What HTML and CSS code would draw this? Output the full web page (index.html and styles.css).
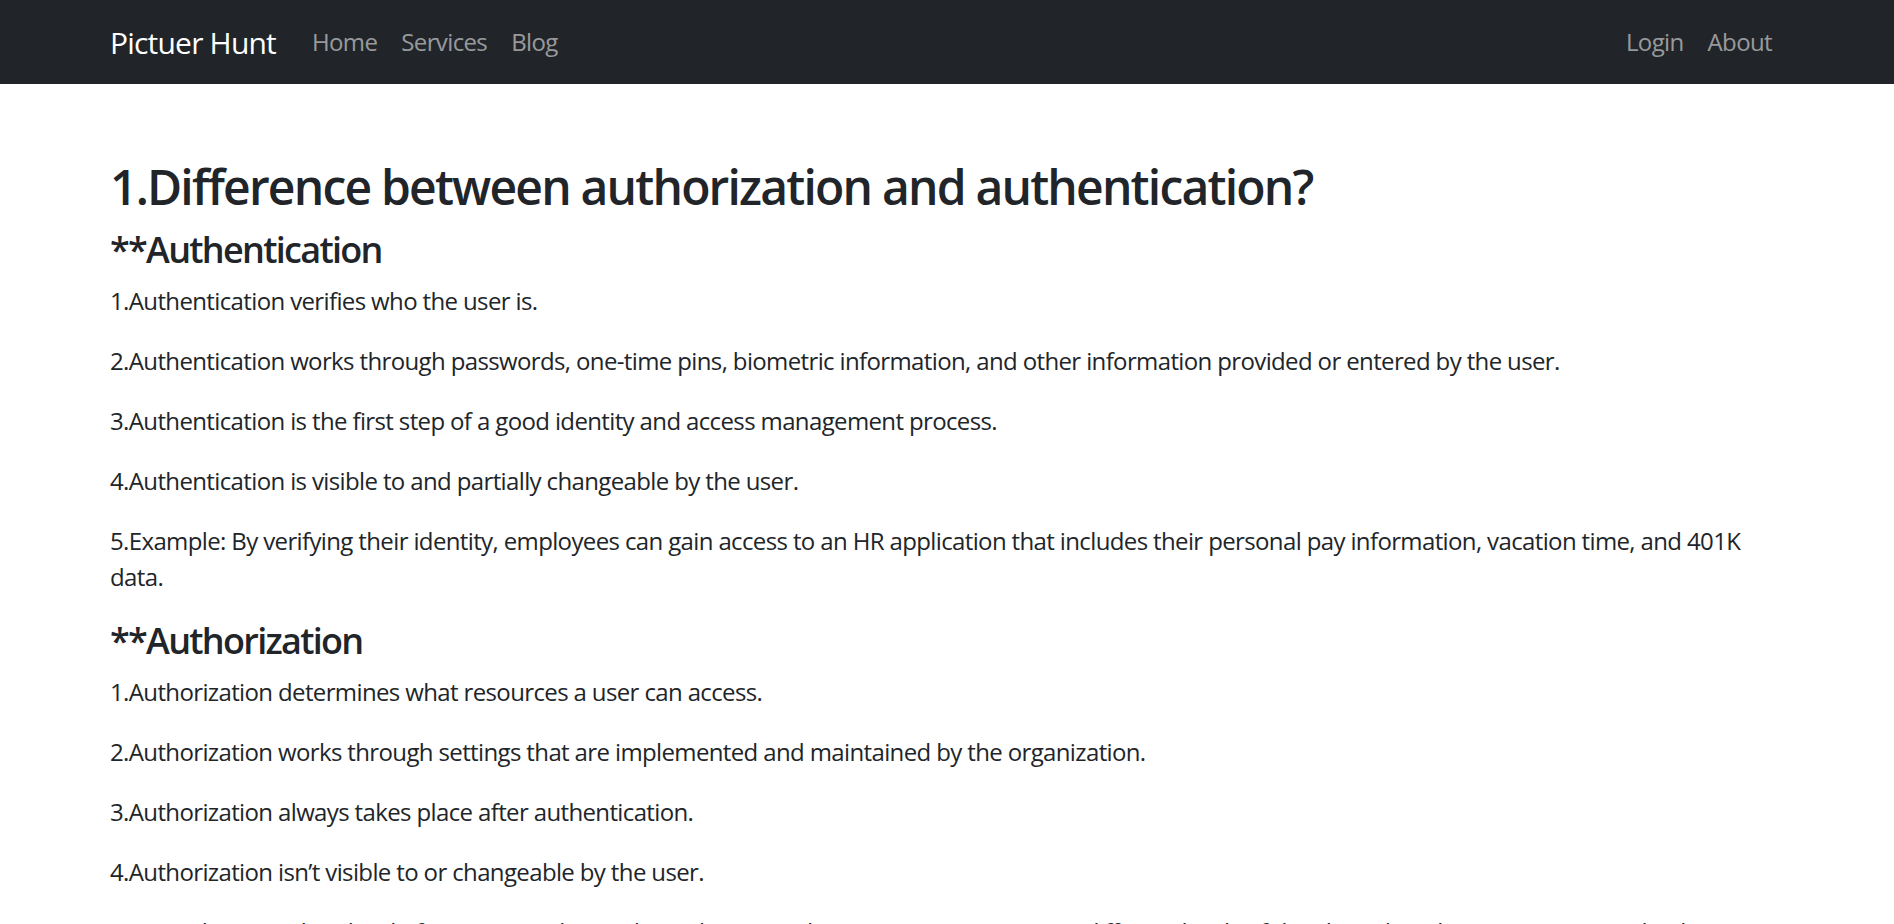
FILE: index.html
```html
<!DOCTYPE html>
<html lang="en">
<head>
<meta charset="utf-8">
<title>Pictuer Hunt - Blog</title>
<link rel="stylesheet" href="styles.css">
</head>
<body>
<nav class="navbar">
  <div class="nav-container">
    <a class="brand" href="#">Pictuer Hunt</a>
    <ul class="nav-list">
      <li><a class="nav-link" href="#">Home</a></li>
      <li><a class="nav-link" href="#">Services</a></li>
      <li><a class="nav-link" href="#">Blog</a></li>
    </ul>
    <ul class="nav-list nav-right">
      <li><a class="nav-link" href="#">Login</a></li>
      <li><a class="nav-link" href="#">About</a></li>
    </ul>
  </div>
</nav>
<main class="container">
  <h2 class="title">1.Difference between authorization and authentication?</h2>
  <h4 class="subtitle">**Authentication</h4>
  <p>1.Authentication verifies who the user is.</p>
  <p>2.Authentication works through passwords, one-time pins, biometric information, and other information provided or entered by the user.</p>
  <p>3.Authentication is the first step of a good identity and access management process.</p>
  <p>4.Authentication is visible to and partially changeable by the user.</p>
  <p>5.Example: By verifying their identity, employees can gain access to an HR application that includes their personal pay information, vacation time, and 401K data.</p>
  <h4 class="subtitle">**Authorization</h4>
  <p>1.Authorization determines what resources a user can access.</p>
  <p>2.Authorization works through settings that are implemented and maintained by the organization.</p>
  <p>3.Authorization always takes place after authentication.</p>
  <p>4.Authorization isn’t visible to or changeable by the user.</p>
  <p>5.Example: Once their level of access is authorized, employees and HR managers can access different levels of data based on the permissions set by the organization.</p>
</main>
</body>
</html>
```
FILE: styles.css
```css
* { box-sizing: border-box; }
html, body { margin: 0; padding: 0; }
body {
  font-family: "Open Sans", "Noto Sans", "Liberation Sans", sans-serif;
  font-size: 24px;
  line-height: 36px;
  letter-spacing: -0.63px;
  color: #212529;
  background: #fff;
}
.navbar {
  background: #212529;
  padding: 12px 0;
}
.nav-container {
  width: 1710px;
  margin: 0 auto;
  padding: 0 18px;
  display: flex;
  align-items: center;
}
.brand {
  color: #fff;
  text-decoration: none;
  font-size: 30px;
  line-height: 45px;
  letter-spacing: -0.8px;
  padding: 7.5px 0;
  margin-right: 24px;
}
.nav-list {
  list-style: none;
  margin: 0;
  padding: 0;
  display: flex;
}
.nav-right { margin-left: auto; }
.nav-link {
  display: block;
  padding: 12px;
  color: rgba(255, 255, 255, 0.55);
  text-decoration: none;
}
.container {
  width: 1710px;
  margin: 74px auto 0;
  padding: 0 18px;
}
.title {
  font-size: 48px;
  line-height: 57.6px;
  font-weight: 600;
  letter-spacing: -1.8px;
  margin: 0 0 12px;
}
.subtitle {
  font-size: 36px;
  line-height: 43.2px;
  font-weight: 600;
  letter-spacing: -1.7px;
  margin: 0 0 12px;
}
p { margin: 0 0 24px; }
```
